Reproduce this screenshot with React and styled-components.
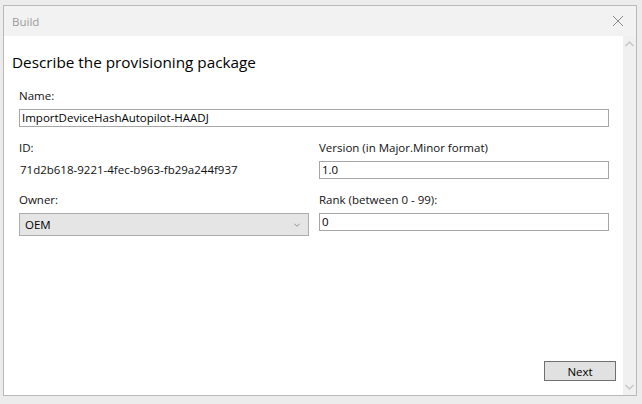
import React from 'react';
import styled, { createGlobalStyle } from 'styled-components';

const GlobalStyle = createGlobalStyle`
  html, body {
    margin: 0;
    padding: 0;
    background: #ececec;
  }
  body {
    font-family: "Open Sans", "Noto Sans", sans-serif;
  }
`;

const Page = styled.div`
  width: 642px;
  height: 404px;
  padding: 5px 5px 8px 3px;
  box-sizing: border-box;
`;

const Window = styled.div`
  width: 100%;
  height: 100%;
  border: 1px solid #b9b9b9;
  box-sizing: border-box;
  display: flex;
  flex-direction: column;
  background: #fff;
`;

const TitleBar = styled.div`
  height: 30px;
  background: #f2f2f2;
  display: flex;
  align-items: center;
  justify-content: space-between;
  padding: 0 12px 0 8px;
  flex-shrink: 0;
`;

const Title = styled.span`
  font-size: 11.5px;
  color: #9a9a9a;
`;

const CloseButton = styled.div`
  width: 12px;
  height: 12px;
  display: flex;
`;

const Body = styled.div`
  flex: 1;
  display: flex;
  min-height: 0;
`;

const Content = styled.div`
  flex: 1;
  display: flex;
  flex-direction: column;
  padding: 16px 14px 14px 8px;
`;

const Heading = styled.h1`
  margin: 0 0 16px;
  font-size: 15.3px;
  font-weight: 400;
  color: #000;
`;

const Form = styled.div`
  display: grid;
  grid-template-columns: 290px 290px;
  column-gap: 10px;
  row-gap: 13px;
  padding-left: 7px;
`;

const Field = styled.div`
  display: flex;
  flex-direction: column;
  grid-column: ${p => (p.$wide ? '1 / span 2' : 'auto')};
`;

const Label = styled.label`
  font-size: 11.5px;
  color: #111;
  line-height: 16px;
  margin-bottom: 5px;
`;

const Value = styled.div`
  font-size: 11.5px;
  color: #111;
  line-height: 18px;
  padding-left: 1px;
`;

const TextBox = styled.div`
  height: 18px;
  border: 1px solid #a6a6a6;
  box-sizing: border-box;
  font-size: 11.5px;
  line-height: 16px;
  padding-left: 2px;
  color: #000;
  background: #fff;
`;

const Select = styled.div`
  height: 23px;
  border: 1px solid #acacac;
  background: #e5e5e5;
  box-sizing: border-box;
  display: flex;
  align-items: center;
  justify-content: space-between;
  padding: 0 8px 0 5px;
  font-size: 11.5px;
  color: #000;
`;

const Footer = styled.div`
  margin-top: auto;
  display: flex;
  justify-content: flex-end;
`;

const Button = styled.button`
  width: 72px;
  height: 20px;
  border: 1px solid #707070;
  background: #e1e1e1;
  font-family: inherit;
  font-size: 11.5px;
  color: #000;
  padding: 0;
  margin-right: -7px;
`;

const ScrollBar = styled.div`
  width: 16px;
  background: #f0f0f0;
  display: flex;
  flex-direction: column;
  justify-content: space-between;
  align-items: center;
  padding: 5px 0;
`;

const Chevron = ({ up, color = '#c2c2c2', w = 9, h = 6 }) => (
  <svg width={w} height={h} viewBox="0 0 9 6">
    <path
      d={up ? 'M0.5 5 L4.5 1 L8.5 5' : 'M0.5 1 L4.5 5 L8.5 1'}
      fill="none"
      stroke={color}
      strokeWidth="1.2"
    />
  </svg>
);

export default function App() {
  return (
    <>
      <GlobalStyle />
      <Page>
        <Window>
          <TitleBar>
            <Title>Build</Title>
            <CloseButton>
              <svg width="12" height="12" viewBox="0 0 12 12">
                <path d="M1 1 L11 11 M11 1 L1 11" stroke="#8a8a8a" strokeWidth="1" />
              </svg>
            </CloseButton>
          </TitleBar>
          <Body>
            <Content>
              <Heading>Describe the provisioning package</Heading>
              <Form>
                <Field $wide>
                  <Label>Name:</Label>
                  <TextBox>ImportDeviceHashAutopilot-HAADJ</TextBox>
                </Field>
                <Field>
                  <Label>ID:</Label>
                  <Value>71d2b618-9221-4fec-b963-fb29a244f937</Value>
                </Field>
                <Field>
                  <Label>Version (in Major.Minor format)</Label>
                  <TextBox>1.0</TextBox>
                </Field>
                <Field>
                  <Label>Owner:</Label>
                  <Select>
                    <span>OEM</span>
                    <Chevron color="#7a7a7a" w={6} h={4} />
                  </Select>
                </Field>
                <Field>
                  <Label>Rank (between 0 - 99):</Label>
                  <TextBox>0</TextBox>
                </Field>
              </Form>
              <Footer>
                <Button>Next</Button>
              </Footer>
            </Content>
            <ScrollBar>
              <Chevron up />
              <Chevron />
            </ScrollBar>
          </Body>
        </Window>
      </Page>
    </>
  );
}
